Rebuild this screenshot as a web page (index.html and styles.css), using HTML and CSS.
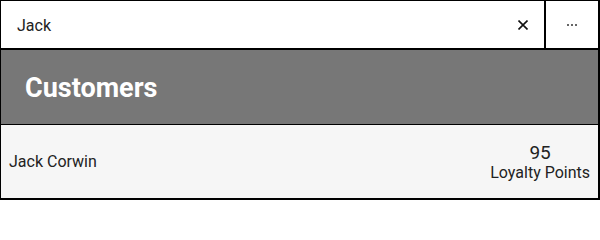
FILE: index.html
```html
<!DOCTYPE html>
<html>
<head>
<meta charset="utf-8">
<link rel="stylesheet" href="styles.css">
</head>
<body>
<div class="app">
  <div class="search">
    <div class="query">Jack</div>
    <button class="clear" aria-label="Clear">
      <svg width="10" height="10" viewBox="0 0 10 10"><path d="M0.5 0.5L9.5 9.5M9.5 0.5L0.5 9.5" stroke="#111" stroke-width="1.6" fill="none"/></svg>
    </button>
    <button class="more" aria-label="More">
      <svg width="12" height="4" viewBox="0 0 12 4"><circle cx="2" cy="2" r="1" fill="#333"/><circle cx="6" cy="2" r="1" fill="#333"/><circle cx="10" cy="2" r="1" fill="#333"/></svg>
    </button>
  </div>
  <div class="header">Customers</div>
  <div class="row">
    <div class="name">Jack Corwin</div>
    <div class="points">
      <div class="num">95</div>
      <div class="label">Loyalty Points</div>
    </div>
  </div>
</div>
</body>
</html>
```
FILE: styles.css
```css
html, body { margin: 0; padding: 0; background: #fff; }
body { font-family: Roboto, "Noto Sans", sans-serif; width: 600px; height: 200px; overflow: hidden; }
.app {
  box-sizing: border-box;
  width: 600px; height: 200px;
  border-style: solid;
  border-color: #000;
  border-width: 1px 2px 2px 1px;
  display: flex; flex-direction: column;
  background: #fff;
}
.search {
  height: 47px;
  border-bottom: 2px solid #000;
  display: flex; align-items: stretch;
}
.query {
  flex: 1;
  display: flex; align-items: center;
  padding-left: 16px;
  padding-top: 1px;
  font-size: 16px; color: #222;
}
.clear {
  flex: none;
  width: 44px; border: 0; background: none; padding: 0;
  display: flex; align-items: center; justify-content: center;
  border-right: 2px solid #000;
}
.more {
  flex: none;
  width: 52px; border: 0; background: none; padding: 0;
  display: flex; align-items: center; justify-content: center;
  padding-top: 1px;
}
.header {
  height: 75px;
  background: #777;
  border-bottom: 1px solid #000;
  color: #fff;
  font-size: 27px; font-weight: 700;
  display: flex; align-items: center;
  padding-left: 24px;
  padding-top: 1px;
  box-sizing: border-box;
}
.row {
  flex: 1;
  background: #f6f6f6;
  display: flex; align-items: center; justify-content: space-between;
  padding: 0 8px;
}
.name { font-size: 16px; color: #222; }
.points { text-align: center; color: #222; }
.num { font-size: 19px; line-height: 22px; }
.label { font-size: 16px; line-height: 18px; }
```
